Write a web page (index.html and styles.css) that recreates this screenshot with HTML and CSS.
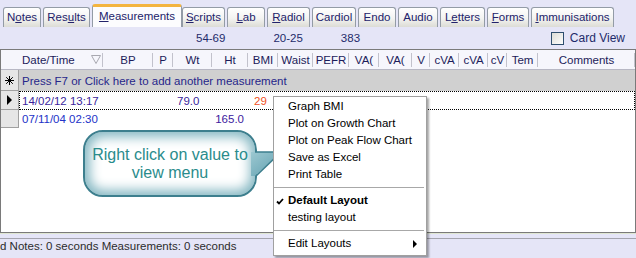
FILE: index.html
```html
<!DOCTYPE html>
<html lang="en">
<head>
    <meta charset="UTF-8">
    <title>Measurements</title>
    <link rel="stylesheet" href="styles.css">
</head>
<body>
    <div class="tabs">
        <div class="tab">N<u>o</u>tes</div>
        <div class="tab">Res<u>u</u>lts</div>
        <div class="tab active"><u>M</u>easurements</div>
        <div class="tab"><u>S</u>cripts</div>
        <div class="tab"><u>L</u>ab</div>
        <div class="tab"><u>R</u>adiol</div>
        <div class="tab">Cardiol</div>
        <div class="tab">Endo</div>
        <div class="tab">Audio</div>
        <div class="tab">L<u>e</u>tters</div>
        <div class="tab"><u>F</u>orms</div>
        <div class="tab"><u>I</u>mmunisations</div>
    </div>

    <div class="toolbar">
        <span class="range range-wt">54-69</span>
        <span class="range range-bmi">20-25</span>
        <span class="range range-pefr">383</span>
        <label class="cardview"><span class="check"></span>Card View</label>
    </div>

    <div class="grid">
        <div class="row head">
            <div class="rh"></div>
            <div class="cols">
                <div class="hc hc-date">Date/Time
                    <svg class="filter" width="10" height="9" viewBox="0 0 10 9"><path d="M0.5 0.5 H9.5 L5 8.5 Z" fill="none" stroke="#a8a8b0"/></svg>
                </div>
                <div class="hc">BP</div>
                <div class="hc">P</div>
                <div class="hc">Wt</div>
                <div class="hc">Ht</div>
                <div class="hc">BMI</div>
                <div class="hc">Waist</div>
                <div class="hc">PEFR</div>
                <div class="hc">VA(</div>
                <div class="hc">VA(</div>
                <div class="hc">V</div>
                <div class="hc">cVA</div>
                <div class="hc">cVA</div>
                <div class="hc">cV</div>
                <div class="hc">Tem</div>
                <div class="hc">Comments</div>
            </div>
        </div>

        <div class="row newrow">
            <div class="rh">
                <svg width="9" height="9" viewBox="0 0 9 9"><path d="M4.5 0 V9 M0 4.5 H9 M1.2 1.2 L7.8 7.8 M7.8 1.2 L1.2 7.8" stroke="#000" stroke-width="1"/></svg>
            </div>
            <div class="newtext">Press F7 or Click here to add another measurement</div>
        </div>

        <div class="row data current">
            <div class="rh"><span class="pointer"></span></div>
            <div class="cols">
                <div class="dc dc-date">14/02/12 13:17</div>
                <div class="dc"></div>
                <div class="dc"></div>
                <div class="dc dc-wt">79.0</div>
                <div class="dc"></div>
                <div class="dc dc-bmi">29</div>
            </div>
        </div>

        <div class="row data second">
            <div class="rh"></div>
            <div class="cols">
                <div class="dc dc-date">07/11/04 02:30</div>
                <div class="dc"></div>
                <div class="dc"></div>
                <div class="dc"></div>
                <div class="dc dc-ht">165.0</div>
            </div>
        </div>
    </div>

    <div class="divider"></div>
    <div class="status">d Notes: 0 seconds Measurements: 0 seconds</div>

    <div class="callout">Right click on value to<br>view menu</div>
    <svg class="callout-tail" width="34" height="32" viewBox="0 0 34 32">
        <defs>
            <linearGradient id="tailfill" x1="0" y1="0" x2="1" y2="1">
                <stop offset="0" stop-color="#9cc8d1"/>
                <stop offset="1" stop-color="#5e9eae"/>
            </linearGradient>
        </defs>
        <polygon points="0,4 30,4 4,28 0,28" fill="url(#tailfill)"/>
        <path d="M4 4 H30 L5 28" fill="none" stroke="#3d7f8e" stroke-width="1.6"/>
    </svg>

    <div class="menu">
        <div class="item">Graph BMI</div>
        <div class="item">Plot on Growth Chart</div>
        <div class="item">Plot on Peak Flow Chart</div>
        <div class="item">Save as Excel</div>
        <div class="item">Print Table</div>
        <div class="sep"></div>
        <div class="item checked">
            <svg class="tick" width="8" height="7" viewBox="0 0 8 7"><path d="M1 3.5 L3 5.5 L7 1" fill="none" stroke="#000" stroke-width="1.8"/></svg>
            Default Layout
        </div>
        <div class="item">testing layout</div>
        <div class="sep"></div>
        <div class="item submenu">Edit Layouts <span class="arrow"></span></div>
    </div>
</body>
</html>
```

FILE: styles.css
```css
body { margin: 0; width: 636px; height: 258px; overflow: hidden; position: relative; background: #e5e5f7; font-family: "Liberation Sans", Arial, sans-serif; font-size: 11px; color: #000; }

/* tab strip */
.tabs { display: grid; grid-template-columns: 40px 49px 90px 45px 40px 45px 46px 40px 42px 47px 44px 85px; align-items: end; height: 27px; padding-left: 3px; box-sizing: border-box; }
.tab { height: 20px; line-height: 19px; margin-right: 2px; box-sizing: border-box; border: 1px solid #939ba6; border-bottom: none; border-radius: 3px 3px 0 0; background: linear-gradient(#ffffff, #f3f3f1 55%, #dcdcd5); color: #22226a; font-size: 11.5px; text-align: center; white-space: nowrap; }
.tab.active { height: 23px; line-height: 18px; margin-right: 0; border-top: 3px solid #f3b440; background: #fcfcfe; }

/* reference ranges + card view */
.toolbar { display: flex; align-items: center; height: 22px; color: #1e2a6a; font-size: 11.5px; }
.range-wt { margin-left: 196px; }
.range-bmi { margin-left: 48px; }
.range-pefr { margin-left: 38px; }
.cardview { display: flex; align-items: center; margin-left: auto; margin-right: 11px; font-size: 12px; }
.check { width: 11px; height: 11px; margin-right: 6px; border: 1px solid #2e4e6e; background: linear-gradient(135deg, #dcdcd6, #fdfdfc); }

/* grid */
.grid { height: 184px; box-sizing: border-box; border: 1px solid #7a7a7a; background: #fff; }
.row { display: flex; box-sizing: border-box; }
.rh { width: 18px; flex: none; box-sizing: border-box; display: flex; align-items: center; justify-content: center; }
.cols { flex: 1; display: grid; grid-template-columns: 84px 50px 20px 39px 36px 30px 35px 36px 30px 33px 18px 29px 29px 19px 31px 1fr; box-sizing: border-box; }

.head { height: 20px; background: #f6f6fc; border-bottom: 1px solid #b8b8c4; }
.hc { display: flex; align-items: center; justify-content: center; overflow: hidden; white-space: nowrap; color: #1c1c5a; font-size: 11.5px; background-image: linear-gradient(#c2c2cc, #c2c2cc); background-size: 1px 14px; background-position: right center; background-repeat: no-repeat; }
.hc-date { justify-content: space-between; padding-left: 3px; padding-right: 1px; }
.filter { margin-right: 1px; }

.newrow { height: 21px; }
.newrow .rh { background: #e6e6e6; border-right: 1px solid #a0a0a0; border-bottom: 1px solid #a0a0a0; }
.newtext { flex: 1; display: flex; align-items: center; padding-left: 3px; background: #d0d0d0; color: #26268a; font-size: 11.5px; }

.data .rh { background: #e6e6e6; border-right: 1px solid #a0a0a0; border-bottom: 1px solid #a0a0a0; }
.data.current { height: 19px; }
.data.current .cols { outline: 1px dotted #000; outline-offset: -1px; }
.data.second { height: 18px; }
.dc { display: flex; align-items: center; white-space: nowrap; font-size: 11.5px; }
.dc-date { padding-left: 3px; }
.dc-wt { padding-left: 4px; }
.dc-ht { justify-content: flex-end; padding-right: 4px; }
.current .dc { color: #3a1f9c; }
.current .dc-bmi { padding-left: 6px; color: #f0501e; }
.second .dc { color: #2232c8; }
.second .dc-ht { color: #3c209e; }
.pointer { width: 0; height: 0; border-top: 5px solid transparent; border-bottom: 5px solid transparent; border-left: 5px solid #000; }

/* status strip */
.divider { height: 6px; box-sizing: border-box; border-top: 1px solid #dfe6d2; border-bottom: 1px solid #a4a4ae; }
.status { height: 19px; line-height: 14px; color: #2c2c2c; font-size: 11.5px; white-space: nowrap; }

/* callout overlay */
.callout { position: absolute; left: 83px; top: 130px; width: 174px; height: 67px; box-sizing: border-box; border: 2px solid #3d7f8e; border-radius: 20px; background: #ffffff; box-shadow: inset 0 0 12px 5px #86b8c3; display: flex; align-items: center; justify-content: center; text-align: center; color: #2a8c8c; font-size: 16px; line-height: 18px; }
.callout-tail { position: absolute; left: 251px; top: 148px; }

/* context menu */
.menu { position: absolute; left: 273px; top: 96px; width: 154px; padding: 1px 0 3px; box-sizing: border-box; border: 1px solid #a0a0a0; background: #fff; box-shadow: 2px 2px 2px rgba(0, 0, 0, 0.35); }
.item { position: relative; height: 17px; line-height: 17px; padding-left: 14px; font-size: 11.5px; white-space: nowrap; }
.item.checked { font-weight: bold; }
.tick { position: absolute; left: 2px; top: 6px; }
.sep { height: 9px; background: linear-gradient(#a8a8a8, #a8a8a8) 0 4px / 150px 1px no-repeat; }
.submenu { display: flex; justify-content: space-between; align-items: center; padding-right: 9px; }
.arrow { width: 0; height: 0; border-top: 4px solid transparent; border-bottom: 4px solid transparent; border-left: 4px solid #000; }
```
